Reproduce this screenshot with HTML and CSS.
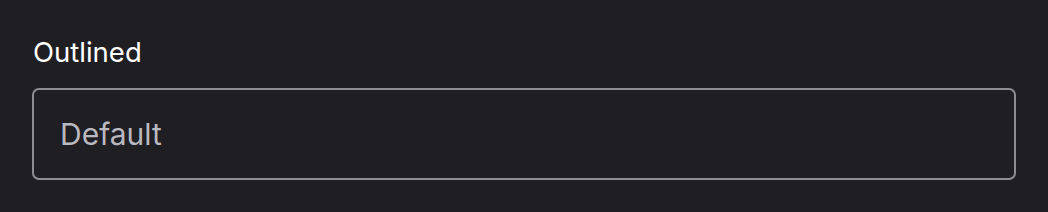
FILE: index.html
```html
<!DOCTYPE html>
<html lang="en">
<head>
  <meta charset="UTF-8" />
  <title>Outlined field</title>
  <link rel="stylesheet" href="styles.css">
</head>
<body>
  <div class="field">
    <label class="field-label" for="outlined">Outlined</label>
    <input class="field-input" id="outlined" type="text" placeholder="Default" />
  </div>
</body>
</html>
```

FILE: styles.css
```css
html, body { margin:0; padding:0; width:100%; height:100%; background:#1f1e23; font-family:'Inter','Noto Sans',sans-serif; overflow:hidden; }
/* outlined text field */
.field { display:flex; flex-direction:column; padding:36px 32px 0 32px; }
.field-label { color:#fff; font-size:27.5px; line-height:32px; margin-bottom:20px; padding-left:1px; }
.field-input {
  box-sizing:border-box; width:984px; height:92px; padding:0 26px; background:transparent;
  border:2px solid #8f8d94; border-radius:7px; color:#fff; font-family:inherit; font-size:30px; outline:none;
}
.field-input::placeholder { color:#bbb9c0; }
```
